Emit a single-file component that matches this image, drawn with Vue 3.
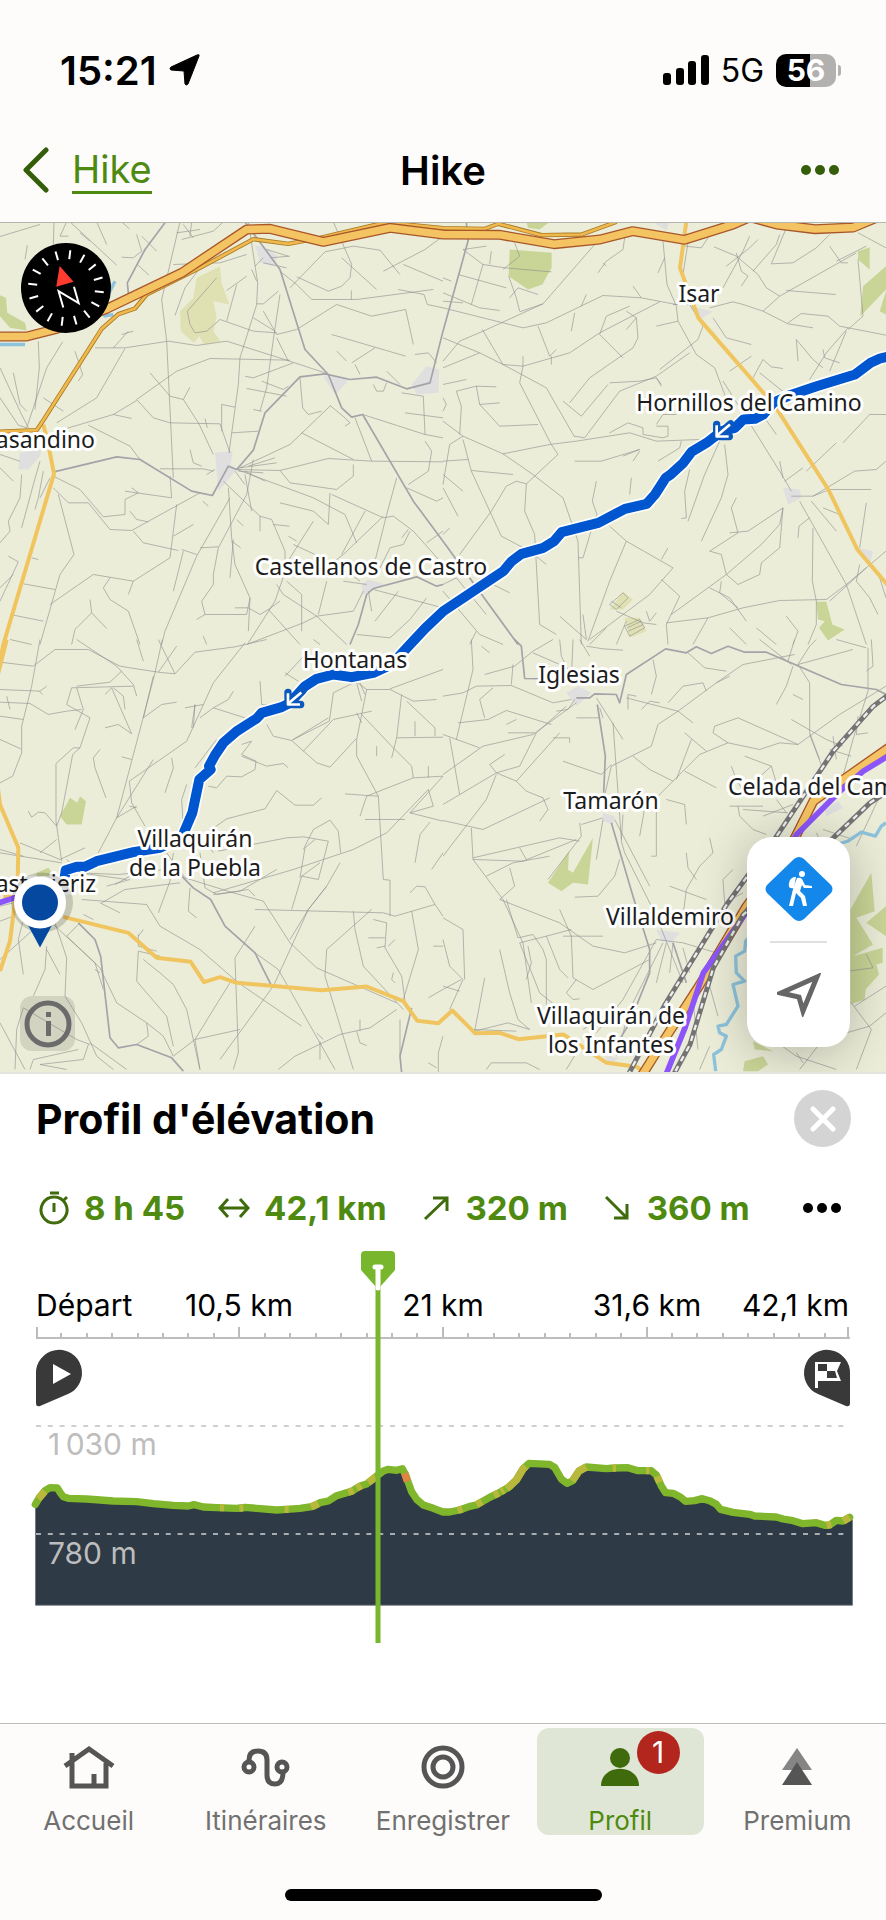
<template>
    <div class="app">
        <header>
            <div class="status-bar">
                <div class="clock">
                    <span>15:21</span>
                    <svg width="32" height="32" viewBox="0 0 32 32"><path d="M30 2 19 30q-2 2-3 0l-1-13-13-1q-2-1 0-3L28 1q3-1 2 1Z" fill="#000" stroke="#000" stroke-width="1" /></svg>
                </div>
                <div class="signal">
                    <svg width="46" height="32" viewBox="0 0 46 32">
                        <rect x="0" y="19" width="8" height="12" rx="3" />
                        <rect x="13" y="14" width="8" height="17" rx="3" />
                        <rect x="25" y="7" width="8" height="24" rx="3" />
                        <rect x="38" y="1" width="8" height="30" rx="3" />
                    </svg>
                    <span class="network">5G</span>
                    <span class="battery">56</span>
                </div>
            </div>
            <nav class="nav-bar">
                <a href="#" class="back">
                    <svg width="28" height="46" viewBox="0 0 28 46"><path d="M24 3 4 23l20 20" fill="none" stroke="#355e0a" stroke-width="5" stroke-linecap="round" stroke-linejoin="round" /></svg>
                    <span>Hike</span>
                </a>
                <h1>Hike</h1>
                <button class="more" aria-label="Plus">
                    <svg width="40" height="12" viewBox="0 0 40 12" fill="#355e0a"><circle cx="6" cy="6" r="5" /><circle cx="20" cy="6" r="5" /><circle cx="34" cy="6" r="5" /></svg>
                </button>
            </nav>
        </header>

        <main class="map">
            <svg class="map-canvas" viewBox="0 223 886 850" preserveAspectRatio="xMidYMid slice">
                <g v-for="tile in tiles" :key="tile.id" :transform="tile.transform" fill="none" stroke-linejoin="round">
                    <path :d="tile.wood" fill="#c9d597" />
                    <path :d="tile.scrub" fill="#e0e1b3" />
                    <path :d="tile.town" fill="#dfdfdf" />
                    <path :d="tile.tracks" stroke="#8f8f8f" stroke-width="3" opacity=".62" />
                    <path :d="tile.roads" stroke="#a3a3a8" stroke-width="5" />
                    <path :d="tile.water" stroke="#8dc3dc" stroke-width="10" />
                </g>

                <!-- 3 units per pixel, origin at the top left of the map -->
                <g transform="translate(0 215) scale(.33333)" fill="none" stroke-linejoin="round">
                    <path v-for="road in yellowRoads" :key="road" :d="road" stroke="#f0c55f" stroke-width="12" />
                    <path :d="serviceRoad" stroke="#a97a25" stroke-width="13" />
                    <path :d="serviceRoad" stroke="#f0b94d" stroke-width="8" />
                    <g v-for="road in motorways" :key="road">
                        <path :d="road" stroke="#a9572a" stroke-width="30" />
                        <path :d="road" stroke="#f4c362" stroke-width="22" />
                    </g>
                    <path :d="purpleRoad" stroke="#8c55fa" stroke-width="17" />
                    <g v-for="rail in railways" :key="rail">
                        <path :d="rail" stroke="#747474" stroke-width="15" />
                        <path :d="rail" stroke="#eee" stroke-width="7" stroke-dasharray="17 17" />
                    </g>
                    <path :d="route" stroke="#fff" stroke-width="40" />
                    <path :d="route" stroke="#0056cf" stroke-width="30" />
                    <g v-for="arrow in arrows" :key="arrow" :transform="arrow">
                        <path d="M26-20-16 16M-16-18v36h38" stroke="#0a57bd" stroke-width="22" stroke-linecap="round" />
                        <path d="M24-18-16 16M-16-16v34h36" stroke="#fff" stroke-width="8" />
                    </g>
                </g>

                <text v-for="place in places" :key="place.name" class="place" :x="place.x" :y="place.y" :text-anchor="place.anchor || 'middle'">{{ place.name }}</text>

                <ellipse cx="42" cy="903" rx="31" ry="30" fill="#000" opacity=".16" />
                <path d="M26 922 40 948l14-26Z" fill="#04489f" />
                <circle cx="40" cy="903" r="26" fill="#fff" />
                <circle cx="40" cy="903" r="18" fill="#04489f" />
            </svg>

            <svg class="compass" viewBox="-45 -45 90 90">
                <circle r="45" />
                <g transform="rotate(-16)">
                    <path v-for="n in 16" :key="n" d="M0-38v9" :transform="`rotate(${n * 22.5})`" stroke="#fff" stroke-width="2" />
                    <path d="M0-23 9-4H-9Z" fill="#ff3b30" />
                    <path d="M-8 18V1L8 18V1" fill="none" stroke="#fff" stroke-width="2" />
                </g>
            </svg>
            <button class="info" aria-label="Informations">
                <svg width="48" height="48" viewBox="0 0 48 48"><circle cx="24" cy="24" r="21" fill="none" stroke="#6b6b6b" stroke-width="5" /><path d="M22 12h5v5h-5zM22 21h5v15h-5z" fill="#6b6b6b" /></svg>
            </button>
            <div class="controls">
                <button aria-label="Activité">
                    <svg width="68" height="64" viewBox="0 0 68 64">
                        <path d="M29 2q5-4 10 0l27 26q3 4 0 8L39 62q-5 4-10 0L2 36q-3-4 0-8Z" fill="#1387ea" />
                        <g fill="#fff">
                            <circle cx="37" cy="17" r="3" />
                            <path d="M31 20c-5-1-8 5-7 10q2 2 5 1Z" />
                            <path d="M32 21q3-1 5 1l3 6 7 1v2h-8l-2-3-2 6 5 5 2 10h-4l-2-8-5-5-3 13h-4l4-17Z" />
                        </g>
                    </svg>
                </button>
                <hr>
                <button aria-label="Ma position">
                    <svg width="44" height="44" viewBox="0 0 44 44"><path d="M4 20 40 4 26 38 22 24Z" fill="none" stroke="#666" stroke-width="5" /></svg>
                </button>
            </div>
        </main>

        <section class="panel">
            <div class="panel-head">
                <h2>Profil d'élévation</h2>
                <button class="close" aria-label="Fermer">
                    <svg width="26" height="26" viewBox="0 0 26 26"><path d="M3 3l20 20M23 3 3 23" stroke="#fff" stroke-width="5" stroke-linecap="round" /></svg>
                </button>
            </div>
            <div class="stats">
                <div v-for="stat in stats" :key="stat.value" class="stat">
                    <svg width="32" height="34" viewBox="0 0 32 34"><path :d="stat.icon" fill="none" stroke="#3f6b0c" stroke-width="3" /></svg>
                    <span>{{ stat.value }}</span>
                </div>
                <button class="more" aria-label="Options">
                    <svg width="40" height="12" viewBox="0 0 40 12"><circle cx="6" cy="6" r="5" /><circle cx="20" cy="6" r="5" /><circle cx="34" cy="6" r="5" /></svg>
                </button>
            </div>

            <svg class="chart" viewBox="0 1244 886 406">
                <text v-for="label in distances" :key="label.text" class="distance" :x="label.x" y="1316" :text-anchor="label.anchor">{{ label.text }}</text>
                <path :d="ruler" fill="none" stroke="#bdbdbd" stroke-width="2" />

                <path d="M36 1374a23 23 0 1 1 32 20l-28 12q-4 1-4-3Z" fill="#393939" />
                <path d="M53 1364v20l18-10Z" fill="#fff" />
                <path d="M850 1374a23 23 0 1 0-32 20l28 12q4 1 4-3Z" fill="#393939" />
                <path d="M815 1362h26l-4 9 4 10h-23v7h-3Z" fill="#fff" />
                <path d="M818 1364h9v7h-9zM827 1371h8l2 7h-10Z" fill="#393939" />

                <g transform="translate(0 1400) scale(.33333)" fill="none" stroke-linejoin="round">
                    <path :d="area" fill="#2e3a45" />
                    <path :d="elevation" stroke="#80b62b" stroke-width="22" stroke-linecap="round" />
                    <path :d="steepParts" stroke="#b8b83c" stroke-width="22" />
                    <path d="M1214 220 1222 244" stroke="#e08442" stroke-width="22" />
                    <path d="M106 616H2558" stroke="#868c92" stroke-width="3" />
                </g>
                <path d="M36 1426H845" stroke="#cfcfcf" stroke-width="2" stroke-dasharray="5 6.8" />
                <path d="M36 1534H845" stroke="#a9adb0" stroke-width="2" stroke-dasharray="5 6.8" />
                <text class="altitude" x="48" y="1455">1&#8239;030 m</text>
                <text class="altitude" x="48" y="1564">780 m</text>

                <path d="M378 1286V1643" stroke="#78b72d" stroke-width="5" />
                <path d="M365 1251h26q4 0 4 4v15l-15 17h-4l-15-17v-15q0-4 4-4Z" fill="#78b72d" />
                <path d="M378 1268v20M375 1267h6" stroke="#fff" stroke-width="5" stroke-linecap="round" />
            </svg>
        </section>

        <footer>
            <nav class="tabs">
                <a v-for="tab in tabs" :key="tab.label" href="#" :class="{ active: tab.active }">
                    <svg width="52" height="46" viewBox="0 0 52 46" fill="none" stroke="#555" stroke-width="5">
                        <path v-if="tab.label === 'Accueil'" d="M2 22 26 5l24 17M9 9v33h34V19M31 42V30" />
                        <g v-if="tab.label === 'Itinéraires'">
                            <circle cx="9" cy="23" r="5" /><circle cx="42" cy="23" r="5" />
                            <path d="M9 18v-2q0-9 9-9t9 9v15q0 9 8 9t8-12" />
                        </g>
                        <g v-if="tab.label === 'Enregistrer'"><circle cx="26" cy="23" r="19" /><circle cx="26" cy="23" r="10" /></g>
                        <g v-if="tab.active" fill="#3f6b0c" stroke="none"><circle cx="26" cy="14" r="10" /><path d="M7 42c0-23 38-23 38 0Z" /></g>
                        <g v-if="tab.label === 'Premium'" stroke="none"><path d="M26 4 41 26H11Z" fill="#858585" /><path d="M26 18 41 41H11Z" fill="#555" /></g>
                    </svg>
                    <span>{{ tab.label }}</span>
                    <b v-if="tab.badge" class="badge">{{ tab.badge }}</b>
                </a>
            </nav>
            <div class="home-indicator"></div>
        </footer>
    </div>
</template>

<script setup>
const stats = [
    { value: '8 h 45', icon: 'M12 2h9M16 6a13 13 0 1 0 .1 0M16 12v9M26 9l3-3' },
    { value: '42,1 km', icon: 'M2 17h28M10 8 2 17l8 9M22 8l8 9-8 9' },
    { value: '320 m', icon: 'M5 28 27 7M13 7h14v13' },
    { value: '360 m', icon: 'M5 6 26 27M13 27h13V13' },
];

const tabs = [
    { label: 'Accueil' },
    { label: 'Itinéraires' },
    { label: 'Enregistrer' },
    { label: 'Profil', active: true, badge: 1 },
    { label: 'Premium' },
];

const distances = [
    { text: 'Départ', x: 36, anchor: 'start' },
    { text: '10,5 km', x: 239, anchor: 'middle' },
    { text: '21 km', x: 443, anchor: 'middle' },
    { text: '31,6 km', x: 647, anchor: 'middle' },
    { text: '42,1 km', x: 849, anchor: 'end' },
];

let ruler = 'M36 1338H850';
for (let i = 0; i <= 32; i++) {
    const x = i === 0 ? 37 : i === 32 ? 848 : Math.round(35.7 + i * 25.45);
    ruler += `M${x} 1338V${i % 8 === 0 ? 1327 : 1333}`;
}

const elevation = 'M106 313 118 293 135 272 150 263 172 264 182 280 190 290 205 295 260 297 340 303 410 305 460 311 520 316 565 318 582 314 610 321 650 323 710 325 735 322 770 325 830 330 860 328 900 325 940 319 960 308 985 303 1010 287 1055 274 1080 258 1100 252 1130 228 1150 213 1165 208 1190 211 1207 206 1217 225 1225 248 1235 275 1250 298 1270 315 1300 325 1329 336 1349 336 1379 330 1409 319 1429 315 1469 292 1494 280 1529 260 1549 240 1569 207 1587 190 1649 193 1664 202 1684 237 1701 250 1717 243 1737 213 1759 201 1819 206 1844 204 1884 203 1914 212 1954 212 1969 225 1984 258 1997 278 2019 280 2041 291 2057 304 2084 302 2107 296 2129 302 2149 313 2162 328 2199 337 2249 343 2264 348 2329 351 2349 357 2379 362 2409 371 2449 368 2474 376 2489 375 2509 361 2529 363 2549 352';
const area = `${elevation}L2558 360V616H106Z`;
const steepParts = 'M115 296 135 274M660 323h12M718 324h12M854 328h12M933 320 955 311M1045 277 1060 271M1070 264 1084 257M1105 248 1127 231M1373 331 1387 327M1430 314 1446 305M1482 286 1496 279M1503 275 1512 270M1520 266 1549 240 1569 207 1577 199M1717 243 1737 213 1759 201M1838 204h10M1938 212h10M1971 229 1979 247M2480 376l14-3M2530 363 2549 352';

const places = [
    { name: 'Isar', x: 699, y: 302 },
    { name: 'Hornillos del Camino', x: 749, y: 411 },
    { name: 'asandino', x: 95, y: 448, anchor: 'end' },
    { name: 'Castellanos de Castro', x: 371, y: 575 },
    { name: 'Hontanas', x: 355, y: 668 },
    { name: 'Iglesias', x: 579, y: 683 },
    { name: 'Tamarón', x: 611, y: 809 },
    { name: 'Celada del Camino', x: 728, y: 795, anchor: 'start' },
    { name: 'Villaquirán', x: 195, y: 847 },
    { name: 'de la Puebla', x: 195, y: 876 },
    { name: 'astrojeriz', x: 96, y: 892, anchor: 'end' },
    { name: 'Villaldemiro', x: 670, y: 925 },
    { name: 'Villaquirán de', x: 611, y: 1024 },
    { name: 'los Infantes', x: 611, y: 1053 },
];

const route = 'M2670 425 2640 432 2612 445 2565 480 2450 515 2370 542 2320 565 2290 600 2265 613 2230 615 2205 640 2165 650 2120 685 2075 712 2050 745 2012 780 1997 790 1965 840 1940 868 1875 883 1795 925 1685 953 1662 980 1630 1000 1565 1018 1535 1040 1510 1070 1330 1190 1275 1242 1230 1290 1175 1350 1120 1375 1055 1388 1000 1380 950 1393 915 1415 870 1465 845 1478 785 1495 770 1512 710 1550 670 1585 645 1622 627 1655 632 1665 598 1695 577 1795 545 1870 480 1900 400 1913 290 1940 255 1957 230 1957 197 1967 190 2020';
const arrows = ['translate(2166 648)', 'translate(880 1452)'];
const motorways = [
    'M-20 366H80L170 343 320 283 545 175 740 45 810 43 970 82 1170 40 1329 60 1500 61 1662 89 1800 75 1898 50 2054 76 2200 30 2250 8 2330 30 2445 44 2560 39 2625 12',
    'M2680 1590 2530 1695 2440 1760 2370 1900 2240 2075 2100 2310 1990 2480 1915 2600',
];
const serviceRoad = 'M-10 652 110 647 125 625 305 343 355 299 405 282 440 240 600 160 760 74 865 88 960 70 1130 30 1170 25 1329 41 1455 43 1495 28 1625 62 1745 60 1850 22';
const purpleRoad = 'M2680 1615 2590 1670 2520 1730 2390 1860 2245 2085 2110 2275 2055 2440 1990 2600M-10 2067 50 2048 120 2010';
const yellowRoads = [
    'M130 630 145 690 162 778 10 1290-10 1390',
    'M20 1275-10 1395M-10 1690 0 1770 55 1900 53 2000 40 2100 30 2180 0 2270M190 2107 385 2155 470 2230 572 2242 612 2303 660 2288 710 2305 965 2327 1100 2316 1210 2360 1252 2419 1315 2426 1357 2388 1425 2456 1500 2455 1555 2474 1690 2460 1820 2545 1910 2557 1960 2590M10 2046H80',
    'M2059 21 2040 160 2095 310 2325 575 2485 825 2572 1005 2670 1120',
];
const railways = [
    'M2680 1430 2620 1475 2500 1610 2450 1685 2330 1865 2180 2070 1995 2370 1880 2590',
    'M2680 1720 2610 1765 2500 1870 2230 2100 2140 2260 2070 2490 2010 2600',
];

// field tracks, lanes and land cover, one entry per map tile
const tiles = [
    {
        id: 'nw',
        transform: 'translate(0 215) scale(.33333)',
        wood: 'M0 242 18 250 22 295 75 325 80 348 30 340 0 305Z',
        scrub: 'M660 155 590 190 580 250 540 290 542 350 582 385 598 365 612 390 662 380 640 350 650 310 640 260 688 270 665 205Z',
        town: 'M765 92 800 100 833 125 820 155 780 145ZM970 485 1040 490 1040 505 1005 540ZM1280 455 1318 465 1315 535 1250 540 1235 510ZM645 715 698 710 692 750 710 765 655 830ZM60 715 125 705 120 725 85 765 55 765ZM1085 1110 1105 1095 1155 1110 1090 1140Z',
        water: 'M325 240 345 200M310 305 340 300M0 390H75',
        roads: 'M497 22 435 105 382 205 385 235M735 22 840 165 915 405 985 480 1025 580 1055 608 1088 600 1240 860 1329 980M162 772 350 727 420 735 575 830 637 843 685 755 710 765 760 707 795 595 900 487 975 478 1050 495 1130 488 1220 523 1290 505 1329 350M1050 1290 1075 1230 1100 1140 1120 1122 1250 1087 1310 1115 1329 1110',
        tracks: 'M0 66 120 30M82 92 75 135M162 22 160 90M200 22 180 65 205 65M210 22 350 152M240 55 270 80M290 22 320 90M365 22 388 43M410 60 425 110 400 130 365 128M425 65 470 110M412 150 447 182M540 22 485 255 500 380 520 790M575 22 570 65M545 75 640 50 670 22M550 30 580 70M530 55 600 45M520 150 660 145 740 120M525 303 555 220 600 160M562 290 650 190M562 290 570 330 585 355 620 350 660 315 760 350 830 355M680 228 740 185M710 210 680 320M745 22 773 205 770 270 720 430 715 510 687 715M755 165 770 200M790 130 765 155M800 105 865 125M810 130 870 125M790 145 860 160M840 170 890 210 935 255 1070 255 1300 225M870 220 975 112 1060 95 1140 107 1200 180M890 187 985 230 1025 215 1050 190 1055 150 1000 22M1025 130 1130 225M1150 170 1275 105 1329 65M1210 150 1329 200M1195 225 1272 240 1282 270 1329 280M1054 228 1054 255M1010 270 890 345 830 360 790 290M760 310 825 350 M770 268 790 268 835 230M840 240 820 375 800 520 780 590M830 370 865 440M285 400 375 400 505 380 590 393 680 380 860 437 975 475M130 550 190 590M385 350 340 400M400 350 365 360M375 402 290 550 170 625M225 410 248 480 235 500M188 382 140 460 100 580 80 640M115 380 118 460 105 585M0 460 60 590 85 640M40 475 60 570 80 590M0 550 55 632 80 640M410 555 530 470 630 432 870 437M450 475 510 545 550 555 597 628 640 720M570 518 550 555M410 555 460 610 510 625 660 628 690 715M340 600 395 612M265 632 390 695 420 735M190 645 340 600 410 558M665 570 705 578M665 570V650M615 612 622 640M695 655 775 650M740 522 860 545M785 500 850 525 865 515M735 485 760 490 880 445M760 585 785 590M900 490 908 580 925 600 965 590M992 573 870 690 710 765 840 768 985 732 1115 740 1329 742M990 573 1035 610 1050 625 1035 635M1065 610 1115 740M1088 600 1275 660 1329 670M905 655 1060 735M840 768 870 805 1010 825 1060 785 1060 750M710 765 940 850 1035 900 1070 985M715 770 790 775M720 760 830 745M745 755 825 730M735 770 795 800M705 770 735 810M670 800 780 905 815 915 855 1010 855 1045M685 820 695 970 705 1050 750 1150 745 1250M690 850 590 1025 495 1250 485 1290M760 735 740 840 655 1000 640 1080M700 975 690 1090M695 980 722 1000M755 890 735 780M570 705 580 745 605 755M480 763 610 763 640 770M620 780 645 765M510 785 515 850 375 830M608 860 625 875M395 820 415 835 375 855 375 900 310 907 240 825 160 785M160 820 205 865 265 865 330 945 395 948 600 835M175 840 222 1020 180 1080 120 1290M390 890 410 915 445 922M400 950 430 985 535 1008M530 870 510 1030 400 1100 280 1080 150 1170M550 1010 520 1130M545 1005 590 1020M600 1000 655 997M520 965 580 930M710 915 730 935M780 905V950M820 930 868 935M840 865 940 890 985 930M990 835 985 930M995 840 1150 910 1180 905 1240 950 1329 1050M1150 905 1030 1020 990 1050M1160 900 1115 1080M1190 790 1160 900M1220 820 1310 860 1329 850M1095 890 1025 1020M940 920 870 1030 825 1160 745 1285M865 965 890 980M880 990 1010 1050 1080 1100M1170 1000 1210 990 1230 950M1205 970 1225 945M1280 985 1329 950M1170 1000 1130 1080M1240 390 1217 285 1115 305 1010 270M995 360 1217 425M1245 420 1285 415 1310 445M1055 445 1125 400M1010 410 1040 440M1065 450 1080 480M1120 510 1130 530 1150 530 1160 505M1160 470 1200 510M1205 535 1270 545 1275 660M1215 595 1329 610M1275 680 1295 710 1285 770 1225 810M0 720 60 740M0 760 40 800M65 780 60 850 25 920 30 950 0 985M120 740 100 810 65 940M130 770 115 850 105 885M150 790 120 850M25 1025 55 1042 0 1160M95 1030 115 1035M70 1108 165 1125M30 1200 130 1220M30 1275 95 1290M40 1080 0 1120M330 1090 310 1120 330 1155 385 1190 420 1290M400 1100 385 1140M270 1155 275 1195 225 1245 215 1290M275 1195 320 1242M640 1080 640 1110 605 1160 615 1200 740 1200 750 1150M590 1215 615 1200M705 1180 745 1180 780 1200 805 1185 900 1290M805 1185 840 1160M860 1100 905 1140 905 1250M830 1110 850 1140 950 1205 1040 1290M950 1205 1060 1190 1090 1130M980 1100 955 1200M1030 1100 1100 1110M1105 1130 1115 1190M1120 1125 1329 1180M1195 1130 1125 1220M1070 1260 1170 1270 1230 1215 1280 1150M740 1290 910 1225 950 1205M610 1265 620 1290',
    },
    {
        id: 'ne',
        transform: 'translate(443 215) scale(.33333)',
        wood: 'M200 105 326 115V160L298 210 255 225 197 185ZM250 22H320L290 45 255 40ZM1245 110 1280 98V165L1245 135ZM1329 155 1260 215 1252 305 1329 225ZM1310 290 1329 300V230ZM1120 1162 1150 1162 1168 1230 1205 1245 1155 1278 1128 1240 1145 1220 1125 1215Z',
        scrub: 'M540 1132 570 1155 540 1185 500 1185ZM545 1210 590 1210 610 1250 560 1270Z',
        town: 'M632 22 680 22 670 48 640 30ZM740 275 810 290 770 315ZM1020 820 1070 825 1075 850 1035 870ZM1245 1000 1290 1010 1280 1055Z',
        water: '',
        roads: 'M70 22 75 80 0 350M0 980 225 1290',
        tracks: 'M120 150 60 105 130 95M45 180 190 220M85 270 120 150 185 160 325 172M0 235 110 280 170 288M0 260 60 265M0 190 25 200M215 85 230 125 180 165M145 110 140 150M197 185 220 250 230 290M200 250 225 220 285 240M0 280 240 340 310 325 480 243 595 250 700 270M300 268 120 350 50 380 0 440M300 268 455 90M230 292 300 268M395 295 385 350M430 240 415 275M465 175 490 140 540 105 545 70M480 145 490 155M570 215 595 250M650 262 470 355 380 415 240 455 180 450 110 415 0 370M118 345 180 450 310 520 395 668M285 335 320 425 340 405M325 425 325 450M240 425V455L230 505 325 690 345 720 250 808M0 460 110 415M0 510 70 495M40 530 100 515 160 517M0 620 60 665 180 718 320 690 400 680 560 655 640 680 770 675M60 665 20 690 0 810M60 675 85 770 175 965 260 1010 310 1050M0 740 75 735M85 768 210 780M100 515 110 570 170 565M110 570 170 635 285 630M40 530 55 575 50 660M0 550 10 570 0 590M180 718 270 780 360 850 405 980 415 1290M250 808 245 890 275 960 290 1230 340 1260M250 808 220 800 190 815 145 890 50 1020M0 780 60 830M0 820 45 905M20 940 0 960M470 360 540 430M470 360 490 305 560 275M500 505 590 500 640 490 655 515M550 290 580 310 585 370 570 400 440 490 380 565M580 310 550 345M495 510 415 605 360 560M395 665 425 670 530 530 640 485 740 415M640 335 705 320M660 80 672 210 700 275 705 320 760 420 815 460 860 580M665 130 645 175M690 270 740 270 780 335 765 375 650 465M735 85 720 180M725 95 775 100 795 70M813 97 880 125 945 180 970 220 1010 245 1240 115M840 220 900 110 920 65M850 155 920 100 945 75M880 115 895 170 915 185 895 215M930 170 1000 90 1010 60M985 148 1050 145 1120 100 1160 60M985 148 1028 45M1160 95 1195 145 1215 145M1180 140 1270 95M1245 135 1260 305M1245 55 1329 100M960 290 1010 245M960 290 1035 328 1110 340M800 280 870 262 900 270 960 290M1035 325 1075 297 1155 305 1190 335 1329 362M1030 228 1178 240M810 310 850 370 925 390M1060 375 1110 435 1140 460M1060 375 1065 440M1140 405 1145 430 1190 445M1215 340 1150 415 1100 495M1210 350 1160 470M1260 305 1215 345M930 490 960 435 985 457 1020 462M950 475 1050 555M860 470 925 425M840 500 910 610 1010 770 1045 830M965 610 1000 660M500 655 555 625 600 640 600 660 660 670 675 665 675 635 640 635M640 630 660 600 700 600M655 510 640 490M845 690 855 780 835 850 775 980M830 680 785 780 735 920M740 765 725 830 730 910 715 912M715 680 710 700 645 740M565 790 560 840M460 800 448 860 462 900 450 930 420 1030 405 1030M540 725 590 705M395 740 475 740 590 705M570 740 590 710M500 935 550 980 690 1060 620 1140 440 1275M550 980 500 1100 435 1280M655 1035 675 1000M655 1095 710 1145 670 1230 675 1290M670 1225 795 1210 900 1180 1010 1158 1150 1155 1210 1110 1329 1010M795 1210 750 1290M685 1200 850 1080 955 990 1010 930 1020 880 915 950 860 955M865 880 885 955 800 1010 835 1020 850 1080 885 1110 950 1080 955 1045 1010 1000 1020 880M865 880 880 850M800 1120 860 1150 910 1220M835 1100 830 1135 885 1180M1045 845 1110 845 1235 770 1300 765 1329 740M1110 845 1160 825 1285 825M1010 740 1020 790M1025 800 1080 760M1090 770 1180 685M1200 685 1280 600 1329 600M1070 860 1210 1110 1270 1290M1110 940 1108 1100 1120 1160 1120 1230 1095 1290M1065 970 1068 935 1100 910M1105 860 1180 950M1140 880 1190 900M1270 865 1250 1000M1270 1060 1160 1160M1250 1050 1240 1100 1280 1150 1305 1200M1310 1090 1329 1150M860 1240 910 1290M940 1240 1000 1290M1030 1205 1065 1250 1050 1290M500 1170 540 1135 555 1150 520 1185ZM505 1160 535 1180M545 1235 590 1215 605 1240 560 1265ZM553 1240 595 1220M556 1250 600 1230M520 1190 600 1225 640 1230M610 1190 620 1220 640 1195M520 1290 550 1220M490 1240 440 1290M350 1205 430 1275 420 1200M0 1110 40 1090 130 1200M0 1130 110 1260 180 1290M100 1250 80 1290M150 1110 200 1135',
    },
    {
        id: 'sw',
        transform: 'translate(0 640) scale(.33333)',
        wood: 'M210 475 232 490 240 470 258 485 245 555H200L180 530ZM110 700 145 685 160 705 110 720Z',
        scrub: '',
        town: '',
        water: '',
        roads: 'M545 710 580 745 632 780 675 860 765 940 815 1040M235 850 285 900 302 950 330 1195 355 1225 410 1215 515 1255 550 1295M1235 1105 1200 1250 1205 1300',
        tracks: 'M0 68 100 80 165 30 265 30 360 80 390 85 475 98 525 103 585 38 705 22 800 0M120 0 95 140 65 260 65 340 38 410 0 430M0 150 120 155 140 140M118 155 128 165M0 188 90 192 145 225 200 215 245 210M20 170 30 210M0 230 70 240M0 300 62 328M487 0 465 100 350 535 295 640M525 103 475 0M530 20 475 98M410 0 430 65M230 0 350 80 400 135 410 170M230 140 330 128 365 95 M400 140 215 145 200 195 270 235 240 325 218 345 185 520 170 560M230 145 250 210 225 270M240 325 220 325 168 372V545L185 665M170 560 135 520 115 518 95 533 85 515M170 600 120 640M335 145 395 283 355 255 315 265M340 145 370 170 375 210M315 165 335 145M430 235 485 195 530 188M430 235 460 110M700 155 685 180 640 205 600 235M735 10 640 130 560 305 388 425M585 195 580 265M555 205 610 195M640 205 735 235M585 195 575 265M300 330 280 355 285 385 318 475M365 352 395 360M460 360 350 535M515 355 520 385 495 460M388 425 395 490 435 560M350 535 410 500M388 500 410 505M560 435 545 480 550 565M585 385 650 300M625 440 650 445 680 410 725 412 765 390 768 365 725 345 755 305 725 315M725 350 800 380 850 372 865 385M620 580 680 538 795 508 830 453 885 497 940 497 965 475M655 635 860 595 910 592 985 605 955 720 905 710M960 670 905 710 875 810M945 600 915 625 900 715M910 630 940 570 990 542 1015 575 1022 640M800 255 820 290 875 303 985 235M875 303 950 370 990 383 1068 298M910 335 1000 240 1115 215M780 125 785 195 825 200M855 100 895 125M855 110 930 30M940 0 960 15M1060 120 1100 150 1170 150 1240 185 1310 180M1100 150 1085 225 1070 300 1070 350 1135 470 1150 720 1170 722V830M1085 225 1175 320 1235 380 1240 415 1329 410M1135 470 1100 468 1035 463M1100 470 1080 530M1240 415 1100 470M1205 165 1190 295 1175 355M1190 295 1329 293M1245 245V290M1220 185 1305 265 1305 290M1070 220 1085 250M1130 320V350M1285 380V415M1285 450 1300 500 1230 520 1329 545M1285 450 1160 580 1060 630 880 690 640 760M1230 520 1329 410M1215 540H1095M1290 548 1260 585 1245 670M1329 640 1295 690M1000 160 988 245 880 300M1060 130 1000 160M1070 130 1085 185M1080 130 1095 165M1170 148 1329 90M0 640 185 670M0 630 70 650M60 610 180 660 255 625M200 660 240 700 380 720M240 700 355 705 500 690M245 780 440 795 480 860 600 930 715 1030 905 1160M305 790 375 750 540 730M300 790 360 820M320 740 390 720M390 710 345 735M520 640 510 725 475 820M500 640 555 715 700 760 790 785 870 910 950 985 1190 1090M600 640 615 745 650 765 745 750 765 770M570 745 565 815 590 835M620 610 640 640M640 765 720 755 830 690M765 810 1150 820 1185 830 1305 795 1329 830M1230 760 1250 740 1275 742 1305 795M1235 815 1255 930 1210 1080M1060 815 1065 870 1090 980 1210 1110M1020 670 980 740 925 810 820 1040 660 1260M925 810 870 900M925 810 980 740M1115 810 980 930 975 1010 1060 1290M1120 840 1160 850 1155 925 1205 1010 1215 1085M1130 925 1155 920M1105 895H1155M1165 920 1185 900M1180 1000 1175 1020 1185 1030M765 940 835 990 1005 1290M765 860 705 955 715 1240 700 1290M690 1030 640 1110 585 1200 600 1290M585 1200 720 1170M585 1200 520 1250M415 935 410 1025 500 1130 520 1220M415 935 480 950M430 960 480 1000 520 1035 560 1110 600 1290M415 890 430 870M415 885 415 920 470 935M240 850 200 890 300 985 350 1090 440 1150 490 1190 520 1250M250 825 280 840M165 850 200 955 195 1070 245 1150 290 1250 340 1290M160 855 285 970 310 1050M140 920 135 990 100 1070M140 930 180 1005M100 870 0 960M70 840 55 900 70 1005M285 990 300 1000M0 1150 75 1290M45 1290 50 1170 70 1105 230 1200 270 1215M265 1215 250 1260 120 1275 200 1290M235 1230 100 1260 90 1290M270 1210 380 1290M440 1150 445 1190 410 1215M835 1290 885 1250 1020 1185 1110 1165 1190 1110M960 1205V1260M950 1180 970 1200M1070 1175 1080 1210 1100 1218M1080 1140 1080 1175M1200 1140V1250M1329 1050 1285 1075M1329 1190 1315 1240V1300M1285 1270 1310 1285M0 845 40 830M0 800 40 790M1300 920H1329',
    },
    {
        id: 'se',
        transform: 'translate(443 640) scale(.33333)',
        wood: 'M450 595 435 735 390 730 355 755 315 730 378 635 375 690 390 700ZM1285 700 1222 810V1095L1265 1080 1268 1050 1308 1005 1300 975 1319 970V925L1230 950 1290 915 1240 835 1295 815ZM1329 800 1270 850 1329 890ZM960 1250 975 1275 945 1295H900L905 1265ZM930 1205 990 1235 935 1230Z',
        scrub: '',
        town: 'M370 160 405 140 445 160 400 200ZM480 520 515 530 510 555 480 545ZM640 870 710 880 685 912 655 905ZM1145 510 1185 485 1200 505 1150 530ZM485 1250 530 1255 500 1275Z',
        water: 'M1329 550 1315 560 1297 590 1255 578 1215 605 1180 615 1100 710 940 870 908 905 905 935 878 950 880 1000 905 1025 870 1035 885 1100 850 1155 825 1160 830 1180 850 1190 835 1230 812 1245 818 1295',
        roads: 'M215 0 235 20 245 117 330 118M400 175 440 175 455 163 520 165 530 190 550 105 668 28 730 40 760 22 805 42 855 20 905 38H970L1195 135 1300 150 1329 165M463 195 487 350 482 460M505 550 570 770 620 930 620 1000 560 1150 500 1250M690 910 730 1030',
        tracks: 'M85 0 90 90 40 300M0 170 60 160 100 140 205 138 330 190 385 180M115 20 140 40M125 235 110 180 150 145M125 105 215 80 270 35 330 0M210 75 205 135M270 40 350 75 380 100M350 0 355 50 380 100M390 0 385 120M430 20 480 28 540 32M410 0 440 50M45 250 135 240 190 213 325 255M0 405 120 320 270 285 400 190M0 495 160 400 230 380 280 280 370 200M220 425 350 280M220 425 160 400 140 375 185 345M195 280 275 280M330 295 380 295V310M190 255 220 240M20 295 50 465M0 285 110 325M160 405 130 480 0 650M0 543 120 570 320 475M220 425 250 455 300 475 315 510 290 545M400 235H470M395 180 375 210 340 215M470 205 480 235M460 175 540 300M510 250 535 600M580 170 555 165V210M550 175 705 215 750 250M595 210 620 185 650 190M705 215 820 130 900 75 1055 45M705 215 645 255 625 320 505 380 480 490M675 190 720 140 780 130 790 155M820 130 860 110M735 40 785 85 850 95M630 60 640 110 625 165M570 350 620 390 690 425 770 345 855 310 950 330 1010 310 1065 315 1190 225 1329 140M690 425 640 475 640 650 625 650M700 420 745 300M725 280 790 335M855 310 810 280 815 260 885 235 1065 315M725 395 820 445M670 480 725 495 730 555M610 480 590 590M360 365 475 405 505 375M415 555 480 535M410 550 415 590 315 720M480 540 460 660M540 525 535 605 545 640 640 830 720 1030M515 540 620 740M85 565 90 660 180 780 240 910 265 1090M90 655 350 595 410 605M90 660 240 665 400 600M230 625 250 660M130 710 210 670 320 650M200 685 215 740 170 780 350 850 450 920 545 940 640 910M530 660 515 710 465 770 395 773M640 900 720 910 820 940M620 960 450 1050 390 1015 385 890 350 810M360 890H480M385 870 310 890 230 910M190 780 225 895 270 885 300 930 310 960V1100M230 910 290 1060 340 1100 420 1150M170 930 200 1060 225 1140 260 1170M255 920 265 970 250 1020M310 890 350 990 375 1015M0 835 60 870 65 1020M0 900 20 980 60 1020 20 1110M0 1040 50 1055M55 1020 0 1050M125 1015 95 1175 195 1150 260 1170M90 1170 220 1175M370 1060 400 1020M370 1060 390 1080 410 1078M660 910 560 1110 520 1250M670 910 640 1030M690 910 680 1000M720 925 740 1000M640 900 540 1080 460 1180M730 640 735 685 760 720M800 595 810 640 770 680 730 750 720 830M680 740 790 780M865 380 880 420 910 470 930 450M905 350 985 380 1000 430M930 430 985 380M860 500H960M885 500 890 530 930 570 970 585M900 510 1035 520M960 530 1050 495M1000 480 1030 520M840 720 870 690M840 720 845 790 900 760M1285 0 1290 80 1270 95M1180 0 1270 25M1055 0 1035 65M1230 30 1065 75 1100 130 1100 280 1130 360M1045 75 950 0M1065 75 1100 20 1120 0M1050 80 1030 140 1000 195M1050 165 1080 180M1275 25 1275 155 1230 300 1200 410M1045 240 1150 300 1200 320M1100 285 1140 390M1170 290 1180 360M1160 330 1225 350M1245 230 1240 285 1275 280M1329 430 1240 620M1140 570 1230 600M1120 580 1140 620M1215 995 1290 985 1270 945M1235 1100 1329 1040M1225 1090 1285 1170 1240 1290M1329 1120 1280 1160M1070 1290 1140 1200 1280 1160M1060 1240 1080 1270M990 1200 1060 1250 1180 1290M800 1040 825 1130M750 1080 765 1230M770 1290 800 1220M130 1290 145 1270 250 1270 290 1290M420 1170 480 1130M370 1290 400 1240',
    },
];
</script>

<style>
body {
    margin: 0;
    background: #fff;
}
</style>

<style scoped>
.app {
    display: flex;
    flex-direction: column;
    min-height: 100vh;
    font-family: Inter, "Liberation Sans", sans-serif;
    color: #000;
}
button {
    display: flex;
    align-items: center;
    justify-content: center;
    padding: 0;
    border: none;
    background: none;
}
svg {
    flex: none;
}
header {
    background: #fdfcfa;
    border-bottom: 1px solid #b5b5b0;
}
.status-bar {
    display: flex;
    justify-content: space-between;
    align-items: center;
    padding: 46px 50px 0 60px;
    height: 48px;
}
.clock {
    display: flex;
    align-items: center;
    gap: 12px;
    font-size: 40px;
    font-weight: 600;
}
.signal {
    display: flex;
    align-items: center;
}
.network {
    margin: 0 12px;
    font-size: 32px;
}
.battery {
    position: relative;
    width: 60px;
    border-radius: 10px;
    background: linear-gradient(90deg, #000 56%, #b2b1b0 56%);
    color: #fff;
    font-size: 30px;
    font-weight: 700;
    line-height: 33px;
    text-align: center;
}
.battery::after {
    content: "";
    position: absolute;
    top: 11px;
    right: -5px;
    width: 3px;
    height: 11px;
    border-radius: 0 4px 4px 0;
    background: #b2b1b0;
}
.nav-bar {
    display: grid;
    grid-template-columns: 1fr auto 1fr;
    align-items: center;
    height: 104px;
    margin-top: 24px;
    padding: 0 22px;
}
.back {
    display: flex;
    align-items: center;
    gap: 22px;
    color: #4f8a10;
    font-size: 38px;
    text-decoration: none;
}
.back span {
    border-bottom: 3px solid #4f8a10;
    line-height: 44px;
}
h1 {
    margin: 0;
    font-size: 40px;
    font-weight: 600;
}
.nav-bar .more {
    justify-self: end;
    margin-right: 24px;
}
.map {
    position: relative;
    flex: 1;
    min-height: 600px;
    overflow: hidden;
    background: #ebedd8;
    border-bottom: 2px solid #e3e3e0;
}
.map-canvas {
    position: absolute;
    inset: 0;
    width: 100%;
    height: 100%;
}
.place {
    fill: #1c1c1c;
    font-family: "Noto Sans", sans-serif;
    font-size: 23px;
    paint-order: stroke;
    stroke: #fff;
    stroke-width: 6px;
    stroke-linejoin: round;
}
.compass {
    position: absolute;
    top: 20px;
    left: 21px;
    width: 90px;
    height: 90px;
}
.info {
    position: absolute;
    left: 20px;
    bottom: 21px;
    width: 55px;
    height: 55px;
    border-radius: 12px;
    background: rgba(110, 110, 100, .2);
}
.controls {
    position: absolute;
    right: 36px;
    bottom: 25px;
    display: flex;
    flex-direction: column;
    align-items: center;
    width: 103px;
    border-radius: 25px;
    background: #fff;
    box-shadow: 0 4px 50px rgba(0, 0, 0, .25);
}
.controls button {
    width: 100%;
    height: 104px;
}
.controls hr {
    width: 57px;
    height: 2px;
    margin: 0;
    border: none;
    background: #e0e0e0;
}
.panel {
    background: #fff;
    padding-bottom: 73px;
}
.panel-head {
    display: flex;
    align-items: center;
    justify-content: space-between;
    padding: 16px 35px 0 36px;
}
h2 {
    margin: 0;
    font-size: 41px;
    font-weight: 700;
}
.close {
    width: 57px;
    height: 57px;
    border-radius: 50%;
    background: #d4d4d4;
}
.stats {
    display: flex;
    align-items: center;
    gap: 33px;
    padding: 41px 44px 16px 38px;
}
.stat {
    display: flex;
    align-items: center;
    gap: 14px;
    color: #4f8a10;
    font-size: 33px;
    font-weight: 700;
    line-height: 40px;
    white-space: nowrap;
}
.stats .more {
    margin-left: auto;
}
.chart {
    display: block;
    width: 100%;
}
.distance {
    font-size: 30px;
}
.altitude {
    font-size: 30px;
    fill: #bdbdbd;
}
footer {
    background: #fdfcfa;
    border-top: 1px solid #bdbdbb;
    padding: 4px 0 19px;
}
.tabs {
    display: grid;
    grid-template-columns: repeat(5, 1fr);
}
.tabs a {
    position: relative;
    display: flex;
    flex-direction: column;
    align-items: center;
    gap: 16px;
    margin: 0 5px;
    padding-top: 16px;
    height: 91px;
    border-radius: 12px;
    color: #717171;
    font-size: 26px;
    line-height: 30px;
    text-decoration: none;
}
.tabs .active {
    background: #dfe6d6;
    color: #4f8a10;
}
.badge {
    position: absolute;
    top: 3px;
    left: 100px;
    width: 43px;
    border-radius: 50%;
    background: #b3261e;
    color: #fff;
    font-size: 30px;
    font-weight: 400;
    line-height: 43px;
    text-align: center;
}
.home-indicator {
    width: 317px;
    height: 12px;
    margin: 54px auto 0;
    border-radius: 6px;
    background: #000;
}
</style>
